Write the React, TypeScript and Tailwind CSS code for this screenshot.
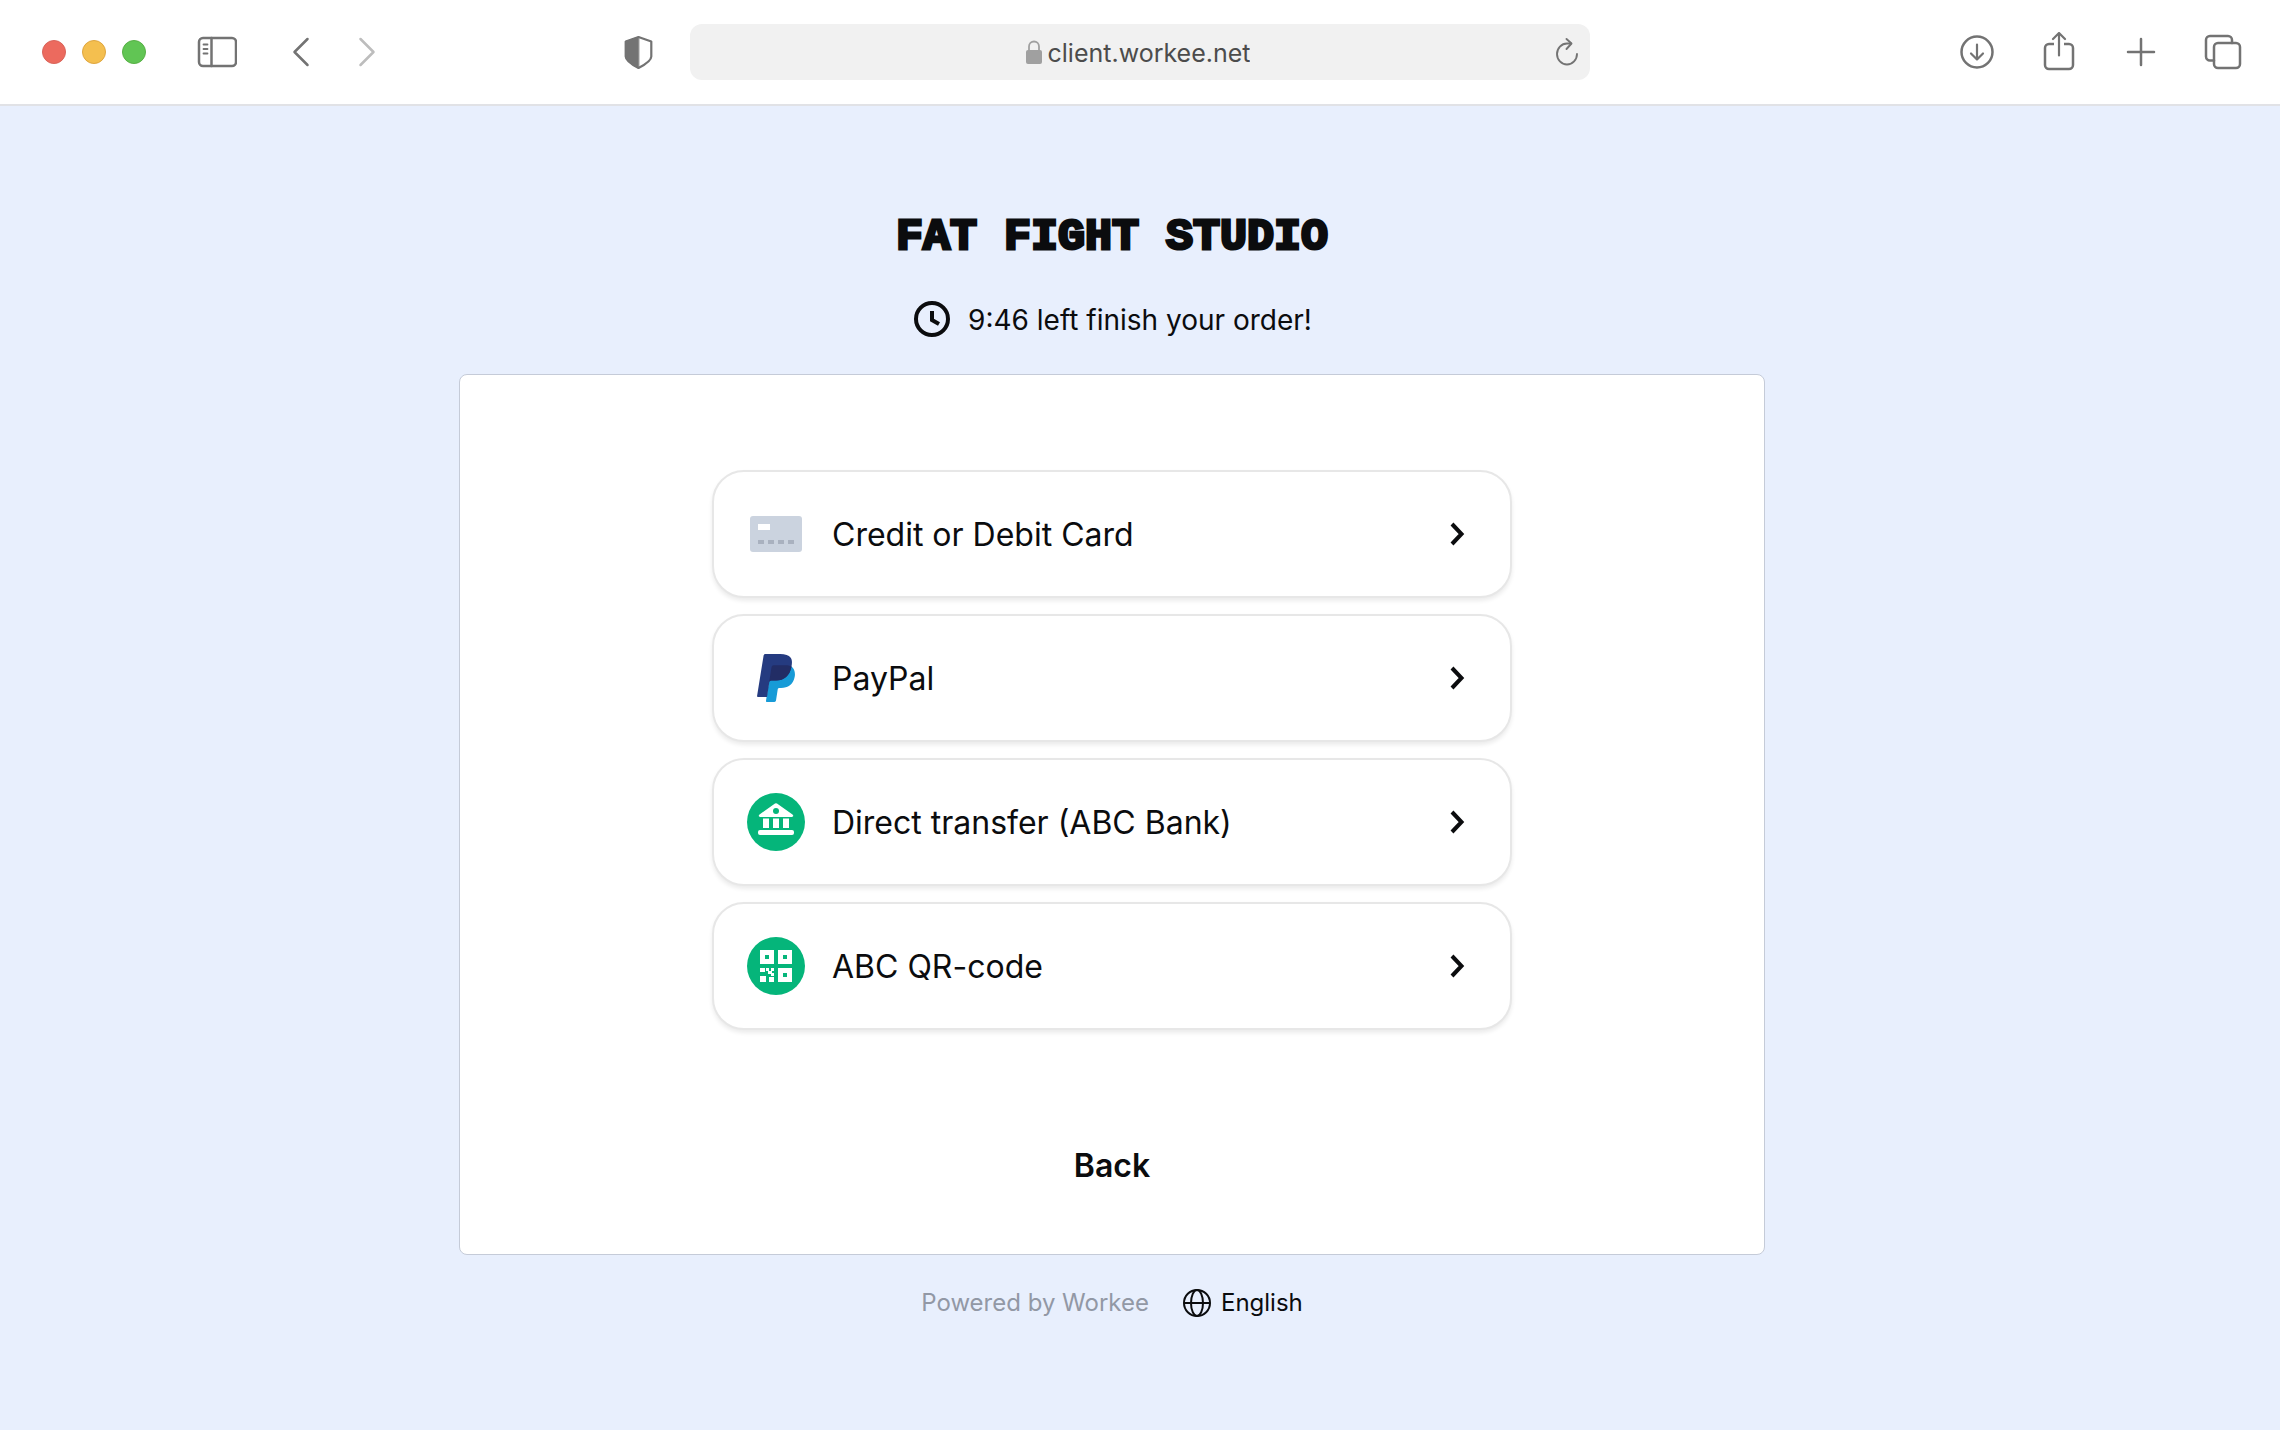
import { useState } from 'react';
import type { ReactNode } from 'react';

type PaymentMethod = {
  id: string;
  label: string;
  icon: ReactNode;
};

function CardIcon() {
  return (
    <svg width="52" height="36" viewBox="0 0 52 36" aria-hidden="true">
      <rect width="52" height="36" rx="3" fill="#cbd3df" />
      <rect x="8" y="8" width="12" height="6" fill="#fff" />
      <path d="M8 24h6v4H8zM18 24h6v4h-6zM28 24h6v4h-6zM38 24h6v4h-6z" fill="#a9b1bf" />
    </svg>
  );
}

function PayPalIcon() {
  return (
    <svg width="38" height="48" viewBox="0 0 38 48" aria-hidden="true">
      <path
        d="M34.5 12.5c2.8 2.4 4 5.900 3.200 10.300C36.300 30.500 31 34 24 34h-1.700c-.8 0-1.500.6-1.600 1.400L19 46.600c-.1.800-.8 1.400-1.600 1.400H10c-.7 0-1.100-.5-1-1.200L12 27z"
        fill="#179bd7"
      />
      <path
        d="M6.600 1.600C6.700.7 7.500 0 8.400 0h14.800c5 0 8.700 1.200 10.500 3.700 1.500 2.100 1.500 4.900.8 8.800C32.800 22 27 26.500 19 26.500h-4.500c-1.200 0-2 .8-2.200 1.800L10 43H1.200C.4 43 0 42.500.100 41.800z"
        fill="#253b80"
      />
      <path
        d="M14.500 13.200c.2-1.200 1-2 2.200-2h11.800c2.200 0 4.300.3 6 1.300C32.800 22 27 26.500 19 26.500h-4.500c-1.200 0-2 .6-2.300 1.500z"
        fill="#222d65"
      />
    </svg>
  );
}

function BankIcon() {
  return (
    <svg width="58" height="58" viewBox="0 0 58 58" aria-hidden="true">
      <circle cx="29" cy="29" r="29" fill="#05b57a" />
      <path
        d="M28 10.500a2 2 0 0 1 2 0l15.500 11c1.300 1 .8 2.500-.7 2.500H13.200c-1.500 0-2-1.500-.7-2.500zM16 25.500h6V35h-6zM26 25.500h6V35h-6zM36 25.500h6V35h-6z"
        fill="#fff"
      />
      <rect x="11" y="37" width="36" height="5" rx="2" fill="#fff" />
      <circle cx="29" cy="18" r="3" fill="#05b57a" />
    </svg>
  );
}

function QrIcon() {
  return (
    <svg width="58" height="58" viewBox="0 0 58 58" aria-hidden="true">
      <circle cx="29" cy="29" r="29" fill="#05b57a" />
      <path
        fillRule="evenodd"
        d="M13 13h14v14H13zM18 18v4h4v-4zM31 13h14v14H31zM36 18v4h4v-4zM31 31h14v14H31zM36 36v4h4v-4z"
        fill="#fff"
      />
      <path
        d="M13 31h5v4h-5zM19 31h3v3h-3zM24 31h3v3h-3zM21 34h4v3h-4zM24 36h3v3h-3zM13 39h6v6h-6zM22 40h5v5h-5z"
        fill="#fff"
      />
    </svg>
  );
}

function ChevronIcon() {
  return (
    <svg width="40" height="40" viewBox="0 0 40 40" fill="none" aria-hidden="true">
      <path d="M14 10l9.500 10-9.500 10" stroke="#0b0c0e" strokeWidth="4" />
    </svg>
  );
}

const METHODS: PaymentMethod[] = [
  { id: 'card', label: 'Credit or Debit Card', icon: <CardIcon /> },
  { id: 'paypal', label: 'PayPal', icon: <PayPalIcon /> },
  { id: 'bank', label: 'Direct transfer (ABC Bank)', icon: <BankIcon /> },
  { id: 'qr', label: 'ABC QR-code', icon: <QrIcon /> },
];

function ToolbarButton({ label, disabled, children }: { label: string; disabled?: boolean; children: ReactNode }) {
  return (
    <button type="button" aria-label={label} disabled={disabled} className="size-10 shrink-0">
      <svg
        viewBox="0 0 40 40"
        fill="none"
        stroke={disabled ? '#bdbdbd' : '#737373'}
        strokeWidth="2.500"
        strokeLinecap="round"
        strokeLinejoin="round"
      >
        {children}
      </svg>
    </button>
  );
}

function BrowserBar() {
  const [url, setUrl] = useState('client.workee.net');

  return (
    <header className="grid grid-cols-[1fr_900px_1fr] items-center h-[106px] border-b-2 border-[#e1e2e6] bg-white">
      {/* window controls, navigation */}
      <div className="flex items-center pl-[42px] pr-8">
        <div className="flex gap-4">
          <span className="size-6 rounded-full border border-[#d9645a] bg-[#ec6a5e]" />
          <span className="size-6 rounded-full border border-[#dfa63f] bg-[#f4bf4f]" />
          <span className="size-6 rounded-full border border-[#57b045] bg-[#61c554]" />
        </div>
        <div className="flex ml-[51px] mr-11">
          <ToolbarButton label="Toggle sidebar">
            <rect x="2" y="6" width="37" height="28" rx="4" />
            <path d="M14.500 6v28" />
            <path d="M6.500 12.500h4M6.500 17h4M6.500 21.500h4" strokeWidth="1.800" />
          </ToolbarButton>
        </div>
        <div className="flex gap-[26px]">
          <ToolbarButton label="Back to previous page">
            <path d="M26.500 7L13.500 20l13 13" />
          </ToolbarButton>
          <ToolbarButton label="Forward" disabled>
            <path d="M13.500 7l13 13-13 13" />
          </ToolbarButton>
        </div>
        <div className="flex ml-auto">
          <ToolbarButton label="Privacy report">
            <path d="M20.500 5L33.300 9.500v15c0 3.500-6 8-12.800 11.500C13.700 32.500 7.700 28 7.700 24.500v-15z" strokeWidth="2.200" />
            <path d="M20.500 5L7.700 9.500v15c0 3.500 6 8 12.800 11.500z" fill="#737373" strokeWidth="1" />
          </ToolbarButton>
        </div>
      </div>

      {/* address bar */}
      <div className="flex items-center h-14 rounded-xl bg-[#f1f1f1] pl-10 pr-1">
        <div className="flex flex-1 items-center justify-center gap-1.5">
          <svg width="16" height="24" viewBox="0 0 16 24" fill="none" aria-hidden="true">
            <path d="M3 11V6.500a5 5 0 0 1 10 0V11" stroke="#a0a0a0" strokeWidth="1.800" />
            <rect y="10" width="16" height="14" rx="2" fill="#a0a0a0" />
          </svg>
          <input
            aria-label="Address"
            value={url}
            onChange={(e) => setUrl(e.target.value)}
            className="field-sizing-content bg-transparent outline-none pt-0.5 text-[25px] leading-9 text-[#4c4c4c]"
          />
        </div>
        <ToolbarButton label="Reload">
          <path d="M31 22a10 10.500 0 1 1-10-10.500h4" strokeWidth="1.900" />
          <path d="M20.500 7l5 4.500-5 5.500" strokeWidth="1.900" />
        </ToolbarButton>
      </div>

      <div className="flex items-center justify-end gap-[42px] pr-[37px]">
        <ToolbarButton label="Downloads">
          <circle cx="20" cy="20" r="15.500" />
          <path d="M20 12.500v15M14 21.500l6 6 6-6" strokeWidth="2.200" />
        </ToolbarButton>
        <ToolbarButton label="Share">
          <path d="M15 12h-5a4 4 0 0 0-4 4v17a4 4 0 0 0 4 4h20a4 4 0 0 0 4-4V16a4 4 0 0 0-4-4h-5" strokeLinecap="butt" />
          <path d="M20 23.500v-22M14 7l6-6 6 6" strokeWidth="2.200" />
        </ToolbarButton>
        <ToolbarButton label="New tab">
          <path d="M20 7v26M7 20h26" />
        </ToolbarButton>
        <ToolbarButton label="Show all tabs">
          <rect x="11" y="11" width="26" height="25" rx="4" />
          <path d="M11 28.500H7a4 4 0 0 1-4-4V8a4 4 0 0 1 4-4h18a4 4 0 0 1 4 4v3" />
        </ToolbarButton>
      </div>
    </header>
  );
}

export default function App() {
  return (
    <div className="min-h-screen flex flex-col bg-[#e8effd] font-[Inter,sans-serif] text-[#0b0c0e]">
      <BrowserBar />

      <main className="flex flex-1 flex-col items-center pt-27 pr-14 pb-20">
        <h1 className="text-[45px] leading-12 font-bold font-['Liberation_Mono',monospace] [-webkit-text-stroke:3px_#0b0c0e]">
          FAT FIGHT STUDIO
        </h1>

        <div className="flex items-center gap-4 mt-9 text-[28px] leading-10">
          <svg width="40" height="40" viewBox="0 0 40 40" fill="none" stroke="#0b0c0e" aria-hidden="true">
            <circle cx="20" cy="20" r="16" strokeWidth="4" />
            <path d="M20 12v9l7 4" strokeWidth="4" />
          </svg>
          <p className="pt-0.5">9:46 left finish your order!</p>
        </div>

        <section className="flex flex-col items-center w-full max-w-[1306px] mt-[34px] pt-[95px] pb-15 rounded-lg border border-[#c5cbd8] bg-white">
          <div className="flex flex-col gap-4 w-full max-w-[800px]">
            {METHODS.map((method) => (
              <button
                key={method.id}
                type="button"
                className="flex items-center gap-[26px] h-32 px-8 rounded-[32px] border-2 border-[#e7e7e7] bg-white text-left text-[32px] leading-10 shadow-[0_3px_4px_rgba(0,0,0,0.08)] cursor-pointer"
              >
                <span className="flex justify-center w-15">{method.icon}</span>
                <span className="flex-1 pt-0.5">{method.label}</span>
                <ChevronIcon />
              </button>
            ))}
          </div>

          <button type="button" className="mt-27 px-8 py-1 text-[32px] leading-12 font-semibold cursor-pointer">
            Back
          </button>
        </section>

        <footer className="flex items-center gap-8 mt-8 text-2xl leading-8">
          <a href="#workee" className="text-[#9298a5]">
            Powered by Workee
          </a>
          <button type="button" className="flex items-center gap-2 cursor-pointer">
            <svg width="32" height="32" viewBox="0 0 32 32" fill="none" stroke="#0b0c0e" strokeWidth="2" aria-hidden="true">
              <circle cx="16" cy="16" r="13" />
              <ellipse cx="16" cy="16" rx="6" ry="13" />
              <path d="M3 16h26" />
            </svg>
            English
          </button>
        </footer>
      </main>
    </div>
  );
}
